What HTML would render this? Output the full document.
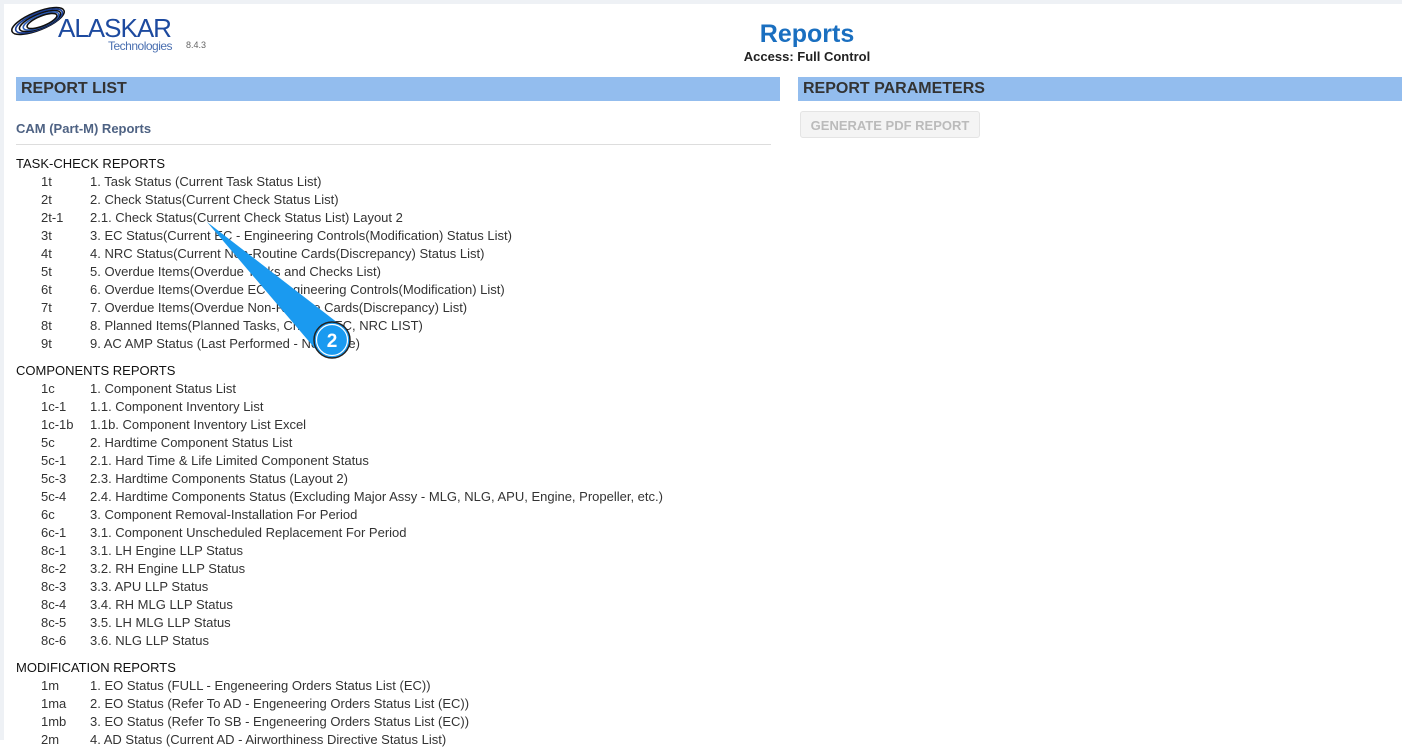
<!DOCTYPE html>
<html><head><style>
body{margin:0;width:1402px;height:740px;overflow:hidden;background:#fff;font-family:"Liberation Sans",sans-serif;position:relative}
.top{position:absolute;left:0;top:0;width:1402px;height:4px;background:#eef1f5}
.lft{position:absolute;left:0;top:0;width:4px;height:740px;background:#eef1f5}
.bar{position:absolute;top:77px;height:24px;background:#93bdee;font-weight:bold;font-size:16px;color:#333;line-height:24px;padding-left:5px;box-sizing:border-box}
.h{position:absolute;left:16px;font-size:13px;color:#111}
.r{position:absolute;font-size:13px;color:#333;white-space:nowrap}
</style></head><body>
<div class="top"></div><div class="lft"></div>
<svg style="position:absolute;left:8px;top:4px" width="60" height="36" viewBox="0 0 60 36">
<g fill="none" stroke-width="1.6">
<ellipse cx="30" cy="17" rx="28" ry="9" transform="rotate(-22 30 17)" stroke="#111"/>
<ellipse cx="31" cy="17" rx="25" ry="8" transform="rotate(-22 31 17)" stroke="#1a3f9a"/>
<ellipse cx="32" cy="17" rx="22" ry="7" transform="rotate(-22 32 17)" stroke="#111"/>
<ellipse cx="33" cy="17" rx="19" ry="6" transform="rotate(-22 33 17)" stroke="#2a5ab5"/>
<ellipse cx="34" cy="17" rx="16" ry="5" transform="rotate(-22 34 17)" stroke="#111"/>
</g></svg>
<div style="position:absolute;left:58px;top:13px;font-size:26px;color:#1d4a9f;letter-spacing:-1px">ALASKAR</div>
<div style="position:absolute;left:108px;top:39px;font-size:12px;color:#4a6fb0;letter-spacing:-0.5px">Technologies</div>
<div style="position:absolute;left:186px;top:40px;font-size:9px;color:#666">8.4.3</div>
<div style="position:absolute;left:0;width:1614px;top:20px;text-align:center;font-size:25px;font-weight:bold;color:#1a6fc0">Reports</div>
<div style="position:absolute;left:0;width:1614px;top:49px;text-align:center;font-size:13px;font-weight:bold;color:#222">Access: Full Control</div>
<div class="bar" style="left:16px;width:764px">REPORT LIST</div>
<div class="bar" style="left:798px;width:604px">REPORT PARAMETERS</div>
<div style="position:absolute;left:800px;top:111px;width:180px;height:27px;border:1px solid #e4e4e4;border-radius:3px;background:#f4f4f4;color:#bbb;font-size:13px;font-weight:bold;line-height:27px;text-align:center;box-sizing:border-box">GENERATE PDF REPORT</div>
<div style="position:absolute;left:16px;top:121px;font-size:13px;font-weight:bold;color:#4e6283">CAM (Part-M) Reports</div>
<div style="position:absolute;left:16px;top:144px;width:755px;height:1px;background:#ddd"></div>
<div class="h" style="top:156px">TASK-CHECK REPORTS</div>
<div class="h" style="top:363px">COMPONENTS REPORTS</div>
<div class="h" style="top:660px">MODIFICATION REPORTS</div>
<div id="rows"></div>
<script>
var d=[[174,[["1t","1. Task Status (Current Task Status List)"],["2t","2. Check Status(Current Check Status List)"],["2t-1","2.1. Check Status(Current Check Status List) Layout 2"],["3t","3. EC Status(Current EC - Engineering Controls(Modification) Status List)"],["4t","4. NRC Status(Current Non-Routine Cards(Discrepancy) Status List)"],["5t","5. Overdue Items(Overdue Tasks and Checks List)"],["6t","6. Overdue Items(Overdue EC - Engineering Controls(Modification) List)"],["7t","7. Overdue Items(Overdue Non-Routine Cards(Discrepancy) List)"],["8t","8. Planned Items(Planned Tasks, Checks, EC, NRC LIST)"],["9t","9. AC AMP Status (Last Performed - Next Due)"]]],
[381,[["1c","1. Component Status List"],["1c-1","1.1. Component Inventory List"],["1c-1b","1.1b. Component Inventory List Excel"],["5c","2. Hardtime Component Status List"],["5c-1","2.1. Hard Time &amp; Life Limited Component Status"],["5c-3","2.3. Hardtime Components Status (Layout 2)"],["5c-4","2.4. Hardtime Components Status (Excluding Major Assy - MLG, NLG, APU, Engine, Propeller, etc.)"],["6c","3. Component Removal-Installation For Period"],["6c-1","3.1. Component Unscheduled Replacement For Period"],["8c-1","3.1. LH Engine LLP Status"],["8c-2","3.2. RH Engine LLP Status"],["8c-3","3.3. APU LLP Status"],["8c-4","3.4. RH MLG LLP Status"],["8c-5","3.5. LH MLG LLP Status"],["8c-6","3.6. NLG LLP Status"]]],
[678,[["1m","1. EO Status (FULL - Engeneering Orders Status List (EC))"],["1ma","2. EO Status (Refer To AD - Engeneering Orders Status List (EC))"],["1mb","3. EO Status (Refer To SB - Engeneering Orders Status List (EC))"],["2m","4. AD Status (Current AD - Airworthiness Directive Status List)"]]]];
var h="";d.forEach(function(s){s[1].forEach(function(r,i){var y=s[0]+i*18;h+='<div class="r" style="left:41px;top:'+y+'px">'+r[0]+'</div><div class="r" style="left:90px;top:'+y+'px">'+r[1]+'</div>';});});
document.getElementById("rows").innerHTML=h;
</script>
<svg style="position:absolute;left:0;top:0" width="1402" height="740">
<path d="M207 222 L347 330 L318 352 Z" fill="#1a9af0"/>
<circle cx="332" cy="340" r="18" fill="#1a9af0" stroke="#222" stroke-width="1.5"/>
<circle cx="332" cy="340" r="15.5" fill="none" stroke="#fff" stroke-width="1.2"/>
<text x="332" y="347" text-anchor="middle" font-family="Liberation Sans" font-weight="bold" font-size="19" fill="#fff">2</text>
</svg>
</body></html>
